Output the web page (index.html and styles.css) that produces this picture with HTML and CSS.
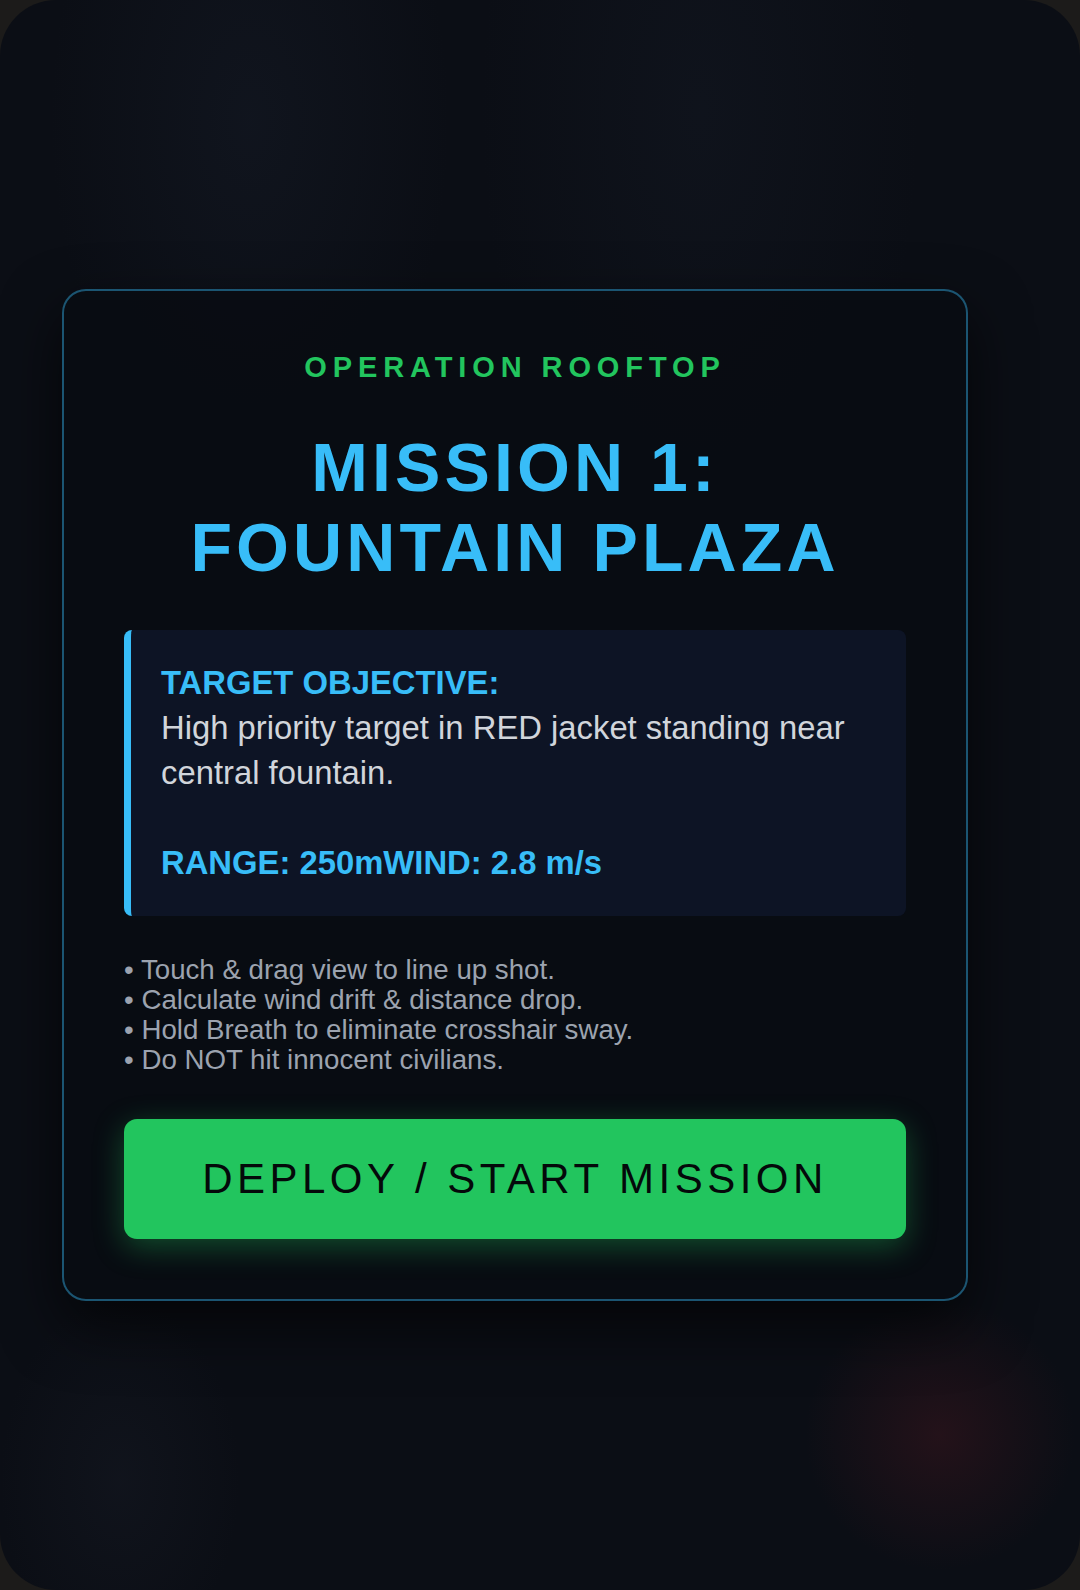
FILE: index.html
```html
<!DOCTYPE html>
<html lang="en">
<head>
  <meta charset="UTF-8" />
  <meta name="viewport" content="width=device-width, initial-scale=1.0"/>
  <title>Operation Rooftop</title>
  <link rel="stylesheet" href="styles.css">
</head>
<body>

  <!-- ===== GAME SCREEN ===== -->
  <div class="screen">
    <div class="overlay">

      <!-- ===== MISSION BRIEFING ===== -->
      <div class="briefing-card">
        <p class="op-name">OPERATION ROOFTOP</p>
        <h1 class="mission-title">MISSION 1:<br>FOUNTAIN PLAZA</h1>

        <div class="target-box">
          <p class="target-text">
            <strong>TARGET OBJECTIVE:</strong><br>
            High priority target in RED jacket standing near central fountain.
          </p>
          <div class="stats">
            <span>RANGE: 250m</span><span>WIND: 2.8 m/s</span>
          </div>
        </div>

        <div class="tips">
          • Touch &amp; drag view to line up shot.<br>
          • Calculate wind drift &amp; distance drop.<br>
          • Hold Breath to eliminate crosshair sway.<br>
          • Do NOT hit innocent civilians.
        </div>

        <button class="btn-deploy">DEPLOY / START MISSION</button>
      </div>

    </div>
  </div>

</body>
</html>
```

FILE: styles.css
```css
* {
  box-sizing: border-box;
  margin: 0;
  padding: 0;
}

body {
  font-family: "Liberation Sans", Arial, sans-serif;
  background-color: #1c1b1a;
  height: 1590px;
  overflow: hidden;
}

.screen {
  height: 100%;
  border-radius: 56px;
  overflow: hidden;
  background-color: #0b0e15;
  background-image:
    radial-gradient(circle at 940px 1435px, rgba(60, 22, 30, 0.5) 0, rgba(60, 22, 30, 0.22) 75px, rgba(60, 22, 30, 0) 135px),
    radial-gradient(ellipse at 250px 120px, rgba(40, 50, 70, 0.18) 0, rgba(40, 50, 70, 0) 200px),
    radial-gradient(ellipse at 700px 110px, rgba(40, 50, 70, 0.14) 0, rgba(40, 50, 70, 0) 220px),
    radial-gradient(ellipse at 120px 1480px, rgba(40, 45, 60, 0.18) 0, rgba(40, 45, 60, 0) 120px);
}

.overlay {
  width: 1030px;
  height: 100%;
  display: flex;
  align-items: center;
  justify-content: center;
}

.briefing-card {
  width: 906px;
  padding: 60px;
  background: rgba(9, 12, 18, 0.92);
  border: 2px solid rgba(56, 189, 248, 0.42);
  border-radius: 24px;
  box-shadow: 0 24px 60px rgba(0, 0, 0, 0.65);
  text-align: center;
}

.op-name {
  color: #22c55e;
  font-size: 29px;
  font-weight: bold;
  letter-spacing: 5.9px;
  line-height: 1.15;
  margin-bottom: 42px;
}

.mission-title {
  color: #38bdf8;
  font-size: 68px;
  font-weight: bold;
  letter-spacing: 4.1px;
  line-height: 80px;
  margin-bottom: 43px;
}

.target-box {
  text-align: left;
  background: #0d1425;
  border-left: 7px solid #38bdf8;
  border-radius: 8px;
  padding: 30px 30px 31px;
  font-size: 32.8px;
  line-height: 45px;
}

.target-text {
  color: #d1d5db;
}

.target-text strong {
  color: #38bdf8;
}

.stats {
  margin-top: 45px;
  color: #38bdf8;
  font-weight: bold;
}

.tips {
  text-align: left;
  color: #9ca3af;
  font-size: 27.7px;
  line-height: 30px;
  margin: 39px 0 44px;
}

.btn-deploy {
  width: 100%;
  height: 120px;
  border: none;
  border-radius: 13px;
  background-color: #22c55e;
  color: #04090a;
  font-family: "Liberation Sans", Arial, sans-serif;
  font-size: 42px;
  letter-spacing: 4.5px;
  box-shadow: 0 8px 30px rgba(34, 197, 94, 0.35);
  cursor: pointer;
}
```
